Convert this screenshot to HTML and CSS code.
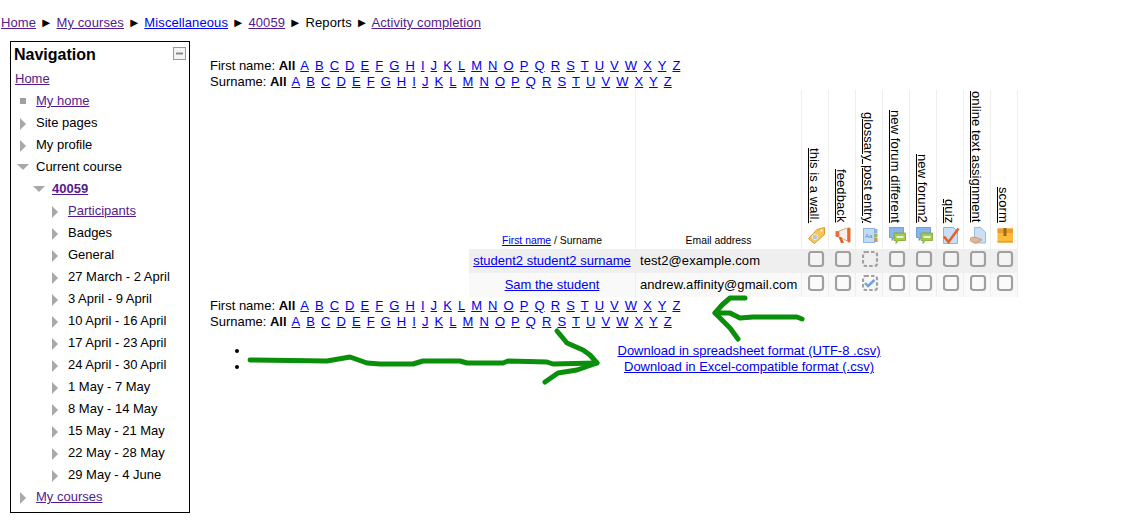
FILE: index.html
```html
<!DOCTYPE html>
<html lang="en">
<head>
<meta charset="utf-8">
<title>Activity completion</title>
<link rel="stylesheet" href="styles.css">
</head>
<body>
<div class="breadcrumb"><a class="seen" href="#">Home</a> <span class="sep">►</span> <a class="seen" href="#">My courses</a> <span class="sep">►</span> <a href="#">Miscellaneous</a> <span class="sep">►</span> <a class="seen" href="#">40059</a> <span class="sep">►</span> Reports <span class="sep">►</span> <a class="seen" href="#">Activity completion</a></div>

<div class="page">
  <aside class="nav">
    <div class="nav-head">
      <h2>Navigation</h2>
      <svg class="collapse" width="13" height="13" viewBox="0 0 13 13"><rect x=".5" y=".5" width="12" height="12" fill="#f4f4f4" stroke="#999"/><rect x="3" y="5.500" width="7" height="2" fill="#888"/></svg>
    </div>
    <div class="tree-home"><a class="seen" href="#">Home</a></div>
    <ul class="tree">
      <li class="item dot"><a class="seen" href="#">My home</a></li>
      <li class="item closed">Site pages</li>
      <li class="item closed">My profile</li>
      <li class="item open">Current course
        <ul class="tree sub">
          <li class="item open"><a class="seen strong" href="#">40059</a>
            <ul class="tree sub">
              <li class="item closed"><a class="seen" href="#">Participants</a></li>
              <li class="item closed">Badges</li>
              <li class="item closed">General</li>
              <li class="item closed">27 March - 2 April</li>
              <li class="item closed">3 April - 9 April</li>
              <li class="item closed">10 April - 16 April</li>
              <li class="item closed">17 April - 23 April</li>
              <li class="item closed">24 April - 30 April</li>
              <li class="item closed">1 May - 7 May</li>
              <li class="item closed">8 May - 14 May</li>
              <li class="item closed">15 May - 21 May</li>
              <li class="item closed">22 May - 28 May</li>
              <li class="item closed">29 May - 4 June</li>
            </ul>
          </li>
        </ul>
      </li>
      <li class="item closed"><a class="seen" href="#">My courses</a></li>
    </ul>
  </aside>

  <main class="main">
    <div class="letters">
      <div>First name: <strong>All</strong> <a href="#">A</a> <a href="#">B</a> <a href="#">C</a> <a href="#">D</a> <a href="#">E</a> <a href="#">F</a> <a href="#">G</a> <a href="#">H</a> <a href="#">I</a> <a href="#">J</a> <a href="#">K</a> <a href="#">L</a> <a href="#">M</a> <a href="#">N</a> <a href="#">O</a> <a href="#">P</a> <a href="#">Q</a> <a href="#">R</a> <a href="#">S</a> <a href="#">T</a> <a href="#">U</a> <a href="#">V</a> <a href="#">W</a> <a href="#">X</a> <a href="#">Y</a> <a href="#">Z</a></div>
      <div>Surname: <strong>All</strong> <a href="#">A</a> <a href="#">B</a> <a href="#">C</a> <a href="#">D</a> <a href="#">E</a> <a href="#">F</a> <a href="#">G</a> <a href="#">H</a> <a href="#">I</a> <a href="#">J</a> <a href="#">K</a> <a href="#">L</a> <a href="#">M</a> <a href="#">N</a> <a href="#">O</a> <a href="#">P</a> <a href="#">Q</a> <a href="#">R</a> <a href="#">S</a> <a href="#">T</a> <a href="#">U</a> <a href="#">V</a> <a href="#">W</a> <a href="#">X</a> <a href="#">Y</a> <a href="#">Z</a></div>
    </div>

    <table class="report">
      <colgroup><col class="c-name"><col class="c-mail"><col class="c-act"><col class="c-act"><col class="c-act"><col class="c-act"><col class="c-act"><col class="c-act"><col class="c-act"><col class="c-act"></colgroup>
      <thead>
        <tr>
          <th class="small"><a href="#">First name</a> / Surname</th>
          <th class="small">Email address</th>
          <th class="act"><div class="act-in"><a class="vtext" href="#">this is a wall.</a>
            <svg width="17" height="17" viewBox="0 0 17 17"><path d="M.5 11.500 9 2.500 16.500.5V7.500L6.500 16.500Q4 15 .5 11.500z" fill="#f6c65a" stroke="#dd9a2c"/><circle cx="7" cy="10" r="2.800" fill="#a9c8ea" stroke="#fbe9b0"/><circle cx="13.500" cy="3.500" r="1" fill="#fff"/></svg></div></th>
          <th class="act"><div class="act-in"><a class="vtext" href="#">feedback</a>
            <svg width="17" height="17" viewBox="0 0 17 17"><path d="M4 4 12.500 1V14L4 10z" fill="#f4f1ec" stroke="#e58a55" stroke-width=".8"/><rect x=".5" y="4" width="3.500" height="6" rx="1" fill="#e8702e"/><rect x="12.500" y=".5" width="3" height="15" rx="1.500" fill="#e26a2a"/><path d="M3.500 10h3l2.500 6H6z" fill="#e2622a"/></svg></div></th>
          <th class="act"><div class="act-in"><a class="vtext" href="#">glossary post entry</a>
            <svg width="17" height="17" viewBox="0 0 17 17"><rect x="1.500" y="1.500" width="11" height="14" fill="#c3dcf6" stroke="#8db4e2"/><rect x="12.500" y="2" width="3" height="4" fill="#8fb4dc"/><rect x="12.500" y="6.500" width="3" height="4" fill="#8dbb4c"/><rect x="12.500" y="11" width="3" height="4" fill="#e88a4a"/><text class="glyph" x="3" y="11">Aa</text></svg></div></th>
          <th class="act"><div class="act-in"><a class="vtext" href="#">new forum different</a>
            <svg width="17" height="17" viewBox="0 0 17 17"><use href="#forum"/></svg></div></th>
          <th class="act"><div class="act-in"><a class="vtext" href="#">new forum2</a>
            <svg width="17" height="17" viewBox="0 0 17 17"><use href="#forum"/></svg></div></th>
          <th class="act"><div class="act-in"><a class="vtext" href="#">quiz</a>
            <svg width="17" height="17" viewBox="0 0 17 17"><path d="M.5.5h10l4 4v12H.5z" fill="#c9dff7" stroke="#8db4e2"/><path d="M1 9.500l4.500 5.500L15.500 1.500" fill="none" stroke="#e2622a" stroke-width="2.600"/></svg></div></th>
          <th class="act"><div class="act-in"><a class="vtext" href="#">online text assignment</a>
            <svg width="17" height="17" viewBox="0 0 17 17"><path d="M4.500.5h6.500l4.500 5v10.500H4.500z" fill="#c9dff7" stroke="#9bbbe0"/><path d="M0 11.500c2-2 4-1.500 6-1l5 1.500c1.500.8.5 2-1 2.200L6 16C4 16.500 1.500 15 0 13.500z" fill="#e3b48e" stroke="#b98a68" stroke-width=".6"/></svg></div></th>
          <th class="act"><div class="act-in"><a class="vtext" href="#">scorm</a>
            <svg width="17" height="17" viewBox="0 0 17 17"><rect x=".5" y="1.500" width="15.500" height="14" fill="#fbbc38"/><rect x=".5" y="1.500" width="15.500" height="4.500" fill="#ec9c2c"/><rect x="6.500" y="1" width="3" height="8" fill="#9a6a20"/><rect x=".5" y="14" width="15.500" height="1.500" fill="#e8a02c"/></svg></div></th>
        </tr>
      </thead>
      <tbody>
        <tr class="r0">
          <td class="name"><a href="#">student2 student2 surname</a></td>
          <td class="mail">test2@example.com</td>
          <td class="box"><svg width="17" height="17" viewBox="0 0 17 17"><use href="#cb"/></svg></td>
          <td class="box"><svg width="17" height="17" viewBox="0 0 17 17"><use href="#cb"/></svg></td>
          <td class="box"><svg width="17" height="17" viewBox="0 0 17 17"><use href="#cbd"/></svg></td>
          <td class="box"><svg width="17" height="17" viewBox="0 0 17 17"><use href="#cb"/></svg></td>
          <td class="box"><svg width="17" height="17" viewBox="0 0 17 17"><use href="#cb"/></svg></td>
          <td class="box"><svg width="17" height="17" viewBox="0 0 17 17"><use href="#cb"/></svg></td>
          <td class="box"><svg width="17" height="17" viewBox="0 0 17 17"><use href="#cb"/></svg></td>
          <td class="box"><svg width="17" height="17" viewBox="0 0 17 17"><use href="#cb"/></svg></td>
        </tr>
        <tr class="r1">
          <td class="name"><a href="#">Sam the student</a></td>
          <td class="mail">andrew.affinity@gmail.com</td>
          <td class="box"><svg width="17" height="17" viewBox="0 0 17 17"><use href="#cb"/></svg></td>
          <td class="box"><svg width="17" height="17" viewBox="0 0 17 17"><use href="#cb"/></svg></td>
          <td class="box"><svg width="17" height="17" viewBox="0 0 17 17"><use href="#cbd"/><path d="M3 8l3 3 6.500-6" fill="none" stroke="#6f9fe8" stroke-width="2.400"/></svg></td>
          <td class="box"><svg width="17" height="17" viewBox="0 0 17 17"><use href="#cb"/></svg></td>
          <td class="box"><svg width="17" height="17" viewBox="0 0 17 17"><use href="#cb"/></svg></td>
          <td class="box"><svg width="17" height="17" viewBox="0 0 17 17"><use href="#cb"/></svg></td>
          <td class="box"><svg width="17" height="17" viewBox="0 0 17 17"><use href="#cb"/></svg></td>
          <td class="box"><svg width="17" height="17" viewBox="0 0 17 17"><use href="#cb"/></svg></td>
        </tr>
      </tbody>
    </table>

    <div class="letters">
      <div>First name: <strong>All</strong> <a href="#">A</a> <a href="#">B</a> <a href="#">C</a> <a href="#">D</a> <a href="#">E</a> <a href="#">F</a> <a href="#">G</a> <a href="#">H</a> <a href="#">I</a> <a href="#">J</a> <a href="#">K</a> <a href="#">L</a> <a href="#">M</a> <a href="#">N</a> <a href="#">O</a> <a href="#">P</a> <a href="#">Q</a> <a href="#">R</a> <a href="#">S</a> <a href="#">T</a> <a href="#">U</a> <a href="#">V</a> <a href="#">W</a> <a href="#">X</a> <a href="#">Y</a> <a href="#">Z</a></div>
      <div>Surname: <strong>All</strong> <a href="#">A</a> <a href="#">B</a> <a href="#">C</a> <a href="#">D</a> <a href="#">E</a> <a href="#">F</a> <a href="#">G</a> <a href="#">H</a> <a href="#">I</a> <a href="#">J</a> <a href="#">K</a> <a href="#">L</a> <a href="#">M</a> <a href="#">N</a> <a href="#">O</a> <a href="#">P</a> <a href="#">Q</a> <a href="#">R</a> <a href="#">S</a> <a href="#">T</a> <a href="#">U</a> <a href="#">V</a> <a href="#">W</a> <a href="#">X</a> <a href="#">Y</a> <a href="#">Z</a></div>
    </div>

    <ul class="downloads">
      <li><a href="#">Download in spreadsheet format (UTF-8 .csv)</a></li>
      <li><a href="#">Download in Excel-compatible format (.csv)</a></li>
    </ul>
  </main>
</div>

<svg class="defs" width="0" height="0">
  <defs>
    <symbol id="cb" viewBox="0 0 17 17"><rect x="1" y="1" width="14" height="14" rx="2.500" fill="#fff" fill-opacity=".35" stroke="#a0a0a0" stroke-width="2.200"/></symbol>
    <symbol id="cbd" viewBox="0 0 17 17"><rect x="1" y="1" width="14" height="14" rx="2.500" fill="none" stroke="#a0a0a0" stroke-width="2.200" stroke-dasharray="3.500 2"/></symbol>
    <symbol id="forum" viewBox="0 0 17 17"><path d="M.5.5h14v10H5l-2 3v-3H.5z" fill="#8ab4ec" stroke="#5f90d8" stroke-width=".8"/><path d="M5 6h11.500v7.500H9l-2 3v-3H5z" fill="#a2cb48" stroke="#7ca52f" stroke-width=".8"/><rect x="7.500" y="9" width="7" height="2" fill="#e8f3cf"/></symbol>
  </defs>
</svg>

<svg class="scribble" width="1132" height="524" viewBox="0 0 1132 524">
  <g fill="none" stroke="#0a8f0a" stroke-width="5" stroke-linecap="round" stroke-linejoin="round">
    <path d="M250 360 327 361 350 357 367 363 380 364 413 364 423 361 460 361 467 363 503 363 508 361 547 362 553 364 597 363"/>
    <path d="M557 331 567 343 583 350 590 355 597 363 577 370 558 373 545 382"/>
    <path d="M745 298 730 298 722 305 715 313 725 323 730 328 738 339"/>
    <path d="M715 313 730 313 740 318 753 317 797 317 802 319"/>
  </g>
</svg>
</body>
</html>
```

FILE: styles.css
```css
html, body {
  margin: 0;
  padding: 0;
  background: #fff;
  color: #000;
  font: 13px/16px "Liberation Sans", Arial, sans-serif;
}
body {
  position: relative;
  width: 1132px;
  height: 524px;
  overflow: hidden;
}
a { color: #00e; }
a.seen { color: #551a8b; }
.breadcrumb {
  padding: 15px 0 0 1px;
  height: 26px;
  letter-spacing: .1px;
}
.page { display: flex; align-items: flex-start; }
.nav {
  box-sizing: border-box;
  flex: none;
  width: 180px;
  height: 472px;
  margin-left: 10px;
  padding: 4px 4px 0;
  border: 1px solid #000;
}
.nav-head { display: flex; justify-content: space-between; align-items: flex-start; }
.nav-head h2 { margin: 0 0 0 -1px; font-size: 16px; line-height: 18px; font-weight: bold; }
.collapse { display: block; margin: 1px -1px 0 0; }
.tree-home { margin-top: 4px; height: 22px; line-height: 22px; }
.tree { margin: 0; padding: 0; list-style: none; }
.tree.sub { padding-left: 16px; }
.item {
  position: relative;
  padding-left: 21px;
  line-height: 22px;
}
.item > ul { margin-left: -21px; }
.item::before { content: ""; position: absolute; }
.closed::before {
  left: 5px; top: 6px;
  border-left: 6px solid #a8a8a8;
  border-top: 6px solid transparent;
  border-bottom: 6px solid transparent;
}
.open::before {
  left: 2px; top: 8px;
  border-top: 6px solid #a8a8a8;
  border-left: 6px solid transparent;
  border-right: 6px solid transparent;
}
.dot::before { left: 5px; top: 8px; width: 6px; height: 6px; background: #a0a0a0; }
.strong { font-weight: bold; }
.main { flex: 1; min-width: 0; margin-left: 20px; padding-top: 17px; }
.letters a { margin-right: 2.45px; }
.letters strong { margin-right: 2px; }
.report {
  table-layout: fixed;
  width: 549px;
  margin: 0 0 1px 259px;
  border-collapse: separate;
  border-spacing: 0;
}
.c-name { width: 167px; }
.c-mail { width: 166px; }
.c-act { width: 27px; }
.report th, .report td {
  box-sizing: border-box;
  padding: 0;
  border-right: 1px solid #eee;
}
.report th { height: 159px; font-weight: normal; vertical-align: bottom; }
.small { font-size: 10.4px; line-height: 12px; padding-bottom: 2px !important; }
.act-in {
  display: flex;
  flex-direction: column;
  align-items: flex-start;
  padding: 0 0 5px 6px;
  gap: 4px;
}
.vtext {
  color: #000;
  writing-mode: vertical-rl;
  text-decoration: underline;
  text-underline-offset: -2px;
  line-height: 15px;
  letter-spacing: .1px;
  margin-left: -1px;
}
.act-in svg { display: block; }
.glyph { font: 6px "Liberation Sans", sans-serif; fill: #5a88cc; }
.report td { height: 24px; vertical-align: middle; }
.r0 td { background: #efefef; }
.r1 td { background: #f9f9f9; }
.name { text-align: center; }
.mail { padding-left: 4px !important; letter-spacing: .08px; }
.report .box { padding: 2px 0 0 6px; vertical-align: top; }
.box svg { display: block; }
.downloads { margin: 13px 0 0; padding: 0 0 0 40px; }
.downloads li { padding-left: 116px; text-align: center; }
.defs { position: absolute; }
.scribble { position: absolute; left: 0; top: 0; pointer-events: none; }
```
